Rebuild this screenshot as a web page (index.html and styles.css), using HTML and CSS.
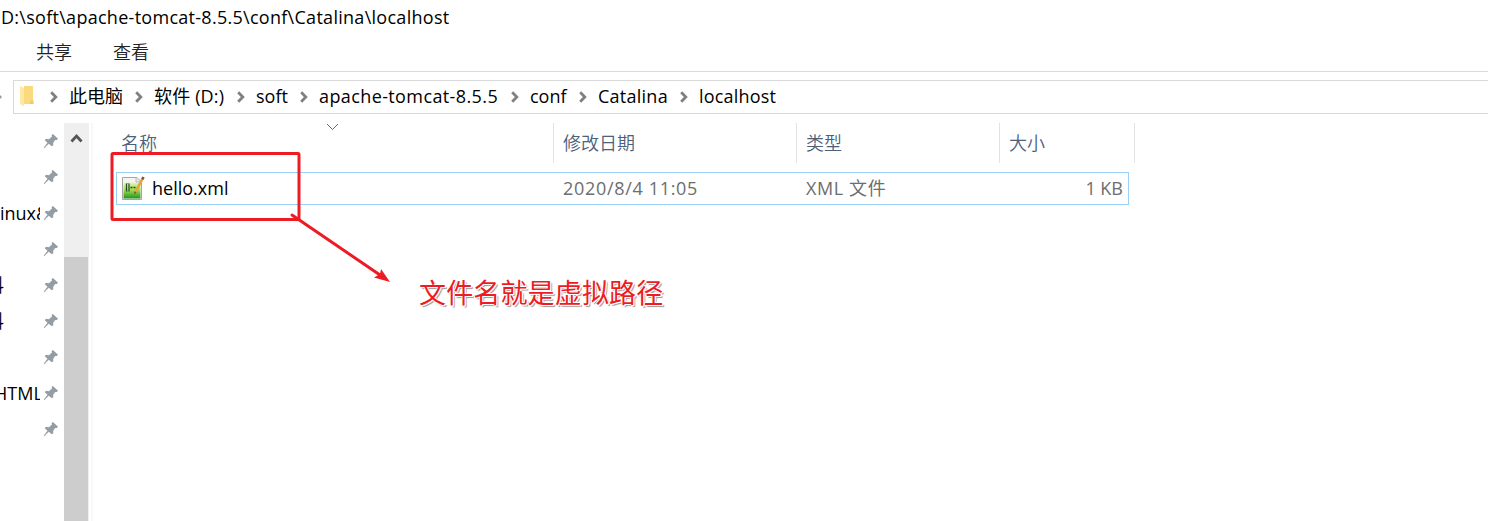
FILE: index.html
```html
<!DOCTYPE html>
<html lang="zh-CN">
<head>
<meta charset="utf-8">
<title>localhost</title>
<link rel="stylesheet" href="styles.css">
</head>
<body>
<svg class="defs" width="0" height="0">
  <symbol id="pin" viewBox="0 0 17 17"><path d="M10.5 0.5 16 5.6 14.5 7 13 6.9 10.8 9.7 10.9 12.6 9.4 13.6 6.1 10.8 1.3 15.6 0.7 15.2 4.8 9.9 1.9 7.2 3.1 5.7 6.3 6 9.5 3.2 9.2 1.7Z" fill="#929da5"/></symbol>
  <symbol id="chev" viewBox="0 0 8 12"><path d="M1.2 1.3 5.8 6 1.2 10.7" fill="none" stroke="#808080" stroke-width="2.8"/></symbol>
</svg>
<header class="titlebar">D:\soft\apache-tomcat-8.5.5\conf\Catalina\localhost</header>
<nav class="tabs"><span>共享</span><span>查看</span></nav>
<div class="address-row">
  <span class="prev-arrow"></span>
  <div class="address">
    <svg class="folder" width="16" height="22" viewBox="0 0 16 22"><path d="M5 1h9v18H4z" fill="#f9da7c"/><path d="M11.500 15.500h3V19h-4z" fill="#f1ca66"/><path d="M1 1 5 3V21.500L1 19Z" fill="#ffe9a2"/></svg>
    <ol class="crumbs">
      <li class="c-pc"><svg class="chev"><use href="#chev"/></svg><span>此电脑</span></li>
      <li class="c-drive"><svg class="chev"><use href="#chev"/></svg><span>软件 (D:)</span></li>
      <li class="c-soft"><svg class="chev"><use href="#chev"/></svg><span>soft</span></li>
      <li class="c-tomcat"><svg class="chev"><use href="#chev"/></svg><span>apache-tomcat-8.5.5</span></li>
      <li class="c-conf"><svg class="chev"><use href="#chev"/></svg><span>conf</span></li>
      <li class="c-catalina"><svg class="chev"><use href="#chev"/></svg><span>Catalina</span></li>
      <li><svg class="chev"><use href="#chev"/></svg><span>localhost</span></li>
    </ol>
  </div>
</div>
<main class="explorer">
  <aside class="quick">
    <div class="q"><span></span><svg><use href="#pin"/></svg></div>
    <div class="q"><span></span><svg><use href="#pin"/></svg></div>
    <div class="q"><span>inux&amp;</span><svg><use href="#pin"/></svg></div>
    <div class="q"><span></span><svg><use href="#pin"/></svg></div>
    <div class="q"><span class="cut">料</span><svg><use href="#pin"/></svg></div>
    <div class="q"><span class="cut">料</span><svg><use href="#pin"/></svg></div>
    <div class="q"><span></span><svg><use href="#pin"/></svg></div>
    <div class="q"><span class="html">HTML</span><svg><use href="#pin"/></svg></div>
    <div class="q"><span></span><svg><use href="#pin"/></svg></div>
  </aside>
  <div class="scroll"><svg width="25" height="30" viewBox="0 0 25 30"><path d="M7.500 18.500 12.500 13 17.500 18.500" fill="none" stroke="#555" stroke-width="2.800"/></svg><div class="thumb"></div></div>
  <section class="files">
    <div class="head">
      <div class="name">名称<svg class="sort" width="13" height="8" viewBox="0 0 13 8"><path d="M1 1 6.500 6.500 12 1" fill="none" stroke="#666"/></svg></div>
      <div class="date">修改日期</div><div class="type">类型</div><div class="size">大小</div>
    </div>
    <div class="row">
      <div class="file"><svg width="24" height="26" viewBox="0 0 24 26">
        <defs><linearGradient id="g" x1="0" y1="0" x2="0" y2="1"><stop offset="0" stop-color="#e4f5c0"/><stop offset=".5" stop-color="#97d84c"/><stop offset="1" stop-color="#1f9420"/></linearGradient></defs>
        <path d="M1.500 1.500H16L20.500 6V23.500H1.500Z" fill="#f4f4f4" stroke="#a5a5a5"/><path d="M2.500 6.500H19.500V22.500H2.500Z" fill="url(#g)"/><path d="M15 1.500V6h4" fill="#e6e6e6" stroke="#bbb"/><path d="M5.500 7.500v8M8 7.500v8" fill="none" stroke="#234b22" stroke-width="1.200"/><path d="M5.500 7.500H8M5.500 15.500H8" stroke="#6f9e55" stroke-width=".7"/><path d="M9.500 11.500h2M12.500 11.500h2" stroke="#234b22" stroke-width="1.300"/><path d="M21.300 3 14.500 16" stroke="#e6a437" stroke-width="2.600"/><path d="M22.500 1 21.300 3.300" stroke="#8a4a55" stroke-width="2.600"/><path d="M13.300 15.300 13.200 18.500 15.700 16.600Z" fill="#795a34"/></svg><span>hello.xml</span></div>
      <div class="rdate">2020/8/4 11:05</div><div class="rtype">XML 文件</div><div class="rsize">1 KB</div>
    </div>
  </section>
</main>
<svg class="annotation" width="1488" height="521" viewBox="0 0 1488 521"><rect x="112" y="153.500" width="187" height="66" rx="1" fill="none" stroke="#ed1c24" stroke-width="3"/><path d="M292 215 380 275" stroke="#ed1c24" stroke-width="3" stroke-linecap="round"/><path d="M390 282 381 269 380 274 374 277.500Z" fill="#ed1c24"/></svg>
<div class="note">文件名就是虚拟路径</div>
</body>
</html>
```
FILE: styles.css
```css
* { box-sizing: border-box; }
body { margin: 0; width: 1488px; height: 521px; overflow: hidden; background: #fff; color: #000; font: 18px/24px "Open Sans", "Noto Sans CJK SC", sans-serif; }
.defs { position: absolute; }
.titlebar { height: 36px; padding: 5px 0 0 1px; white-space: nowrap; letter-spacing: .28px; }
.tabs { height: 36px; display: flex; gap: 41px; padding: 3px 0 0 36px; border-bottom: 1px solid #dadada; color: #222; font-family: "Noto Sans CJK SC", sans-serif; font-weight: 350; }
.address-row { height: 51px; padding-top: 8px; display: flex; }
.prev-arrow { width: 13px; height: 34px; display: flex; align-items: center; }
.prev-arrow::before { content: ""; border-left: 2px solid #999; border-top: 2px solid transparent; border-bottom: 2px solid transparent; }
.address { flex: 1; height: 34px; border: 1px solid #d9d9d9; border-right: 0; display: flex; align-items: center; }
.folder { margin: 0 0 2px 5px; flex: none; }
.crumbs { list-style: none; margin: 0 0 0 15px; padding: 0; display: flex; white-space: nowrap; }
.crumbs li { display: flex; align-items: center; gap: 11px; }
.crumbs span { padding-bottom: 2px; }
.c-pc { width: 85px; }
.c-drive { width: 102px; letter-spacing: .15px; }
.c-soft { width: 63px; }
.c-tomcat { width: 211px; letter-spacing: .39px; }
.c-conf { width: 68px; }
.c-catalina { width: 101px; letter-spacing: .25px; }
.crumbs li:last-child { letter-spacing: .2px; }
.chev { width: 8px; height: 12px; flex: none; }
.explorer { display: flex; height: 398px; }
.quick { width: 64px; }
.q { height: 36px; display: flex; align-items: center; gap: 3px; }
.q span { width: 40px; height: 24px; overflow: hidden; white-space: nowrap; }
.q .cut { text-indent: -14px; width: 5px; margin-right: 35px; color: #002; }
.q .html { text-indent: -6px; }
.q svg { width: 16px; height: 17px; flex: none; margin-top: 1px; }
.scroll { width: 25px; background: #efefef; display: flex; flex-direction: column; justify-content: space-between; }
.thumb { width: 24px; height: 264px; background: #cdcdcd; }
.files { flex: 1; margin-left: 2px; border-left: 2px solid #f8f8f8; color: #6d6d6d; }
.head { display: flex; height: 40px; width: 1042px; color: #4c607a; font-family: "Noto Sans CJK SC", sans-serif; font-weight: 350; }
.head > div { border-right: 1px solid #e2e2e2; padding: 7px 0 0 9px; }
.head .name { position: relative; width: 461px; padding-left: 28px; }
.sort { position: absolute; left: 233px; top: 0; }
.head .date { width: 243px; }
.head .type { width: 203px; }
.head .size { width: 135px; }
.row { display: flex; align-items: center; margin: 9px 0 0 23px; width: 1013px; height: 33px; padding-bottom: 2px; border: 1px solid #99d1f7; white-space: nowrap; }
.file { display: flex; align-items: center; width: 446px; gap: 7px; padding-left: 4px; color: #000; }
.file svg { margin-top: 2px; }
.rdate { width: 243px; letter-spacing: .68px; }
.rtype { width: 203px; letter-spacing: .6px; }
.rsize { flex: 1; text-align: right; padding-right: 5px; }
.annotation { position: absolute; left: 0; top: 0; }
.note { position: absolute; left: 419px; top: 272px; font: 27px/40px "Noto Sans CJK SC", sans-serif; letter-spacing: .15px; color: #ed1c24; white-space: nowrap; text-shadow: -1px 0 #fff, 1px 0 #fff, 0 -1px #fff, 0 1px #fff, 1px 1px #fff, 2px 2px 1px #999; }
```
